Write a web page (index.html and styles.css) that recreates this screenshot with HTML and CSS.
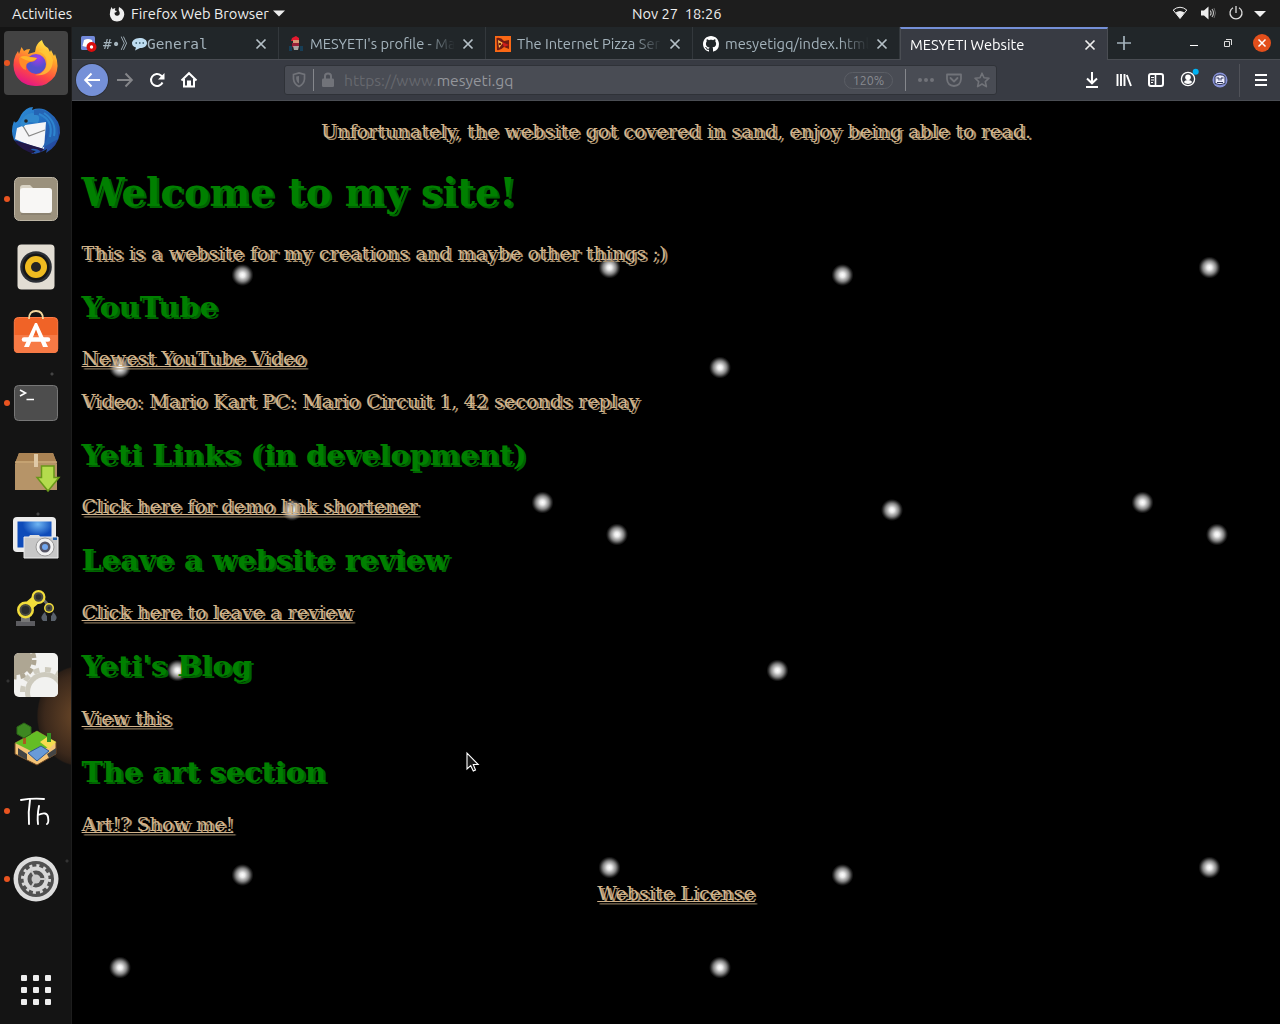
FILE: index.html
```html
<!DOCTYPE html>
<html lang="en">
<head>
<meta charset="utf-8">
<title>MESYETI Website</title>
<link rel="stylesheet" href="styles.css">
</head>
<body>
<header class="topbar">
  <span class="activities">Activities</span>
  <svg class="app-icon" width="16" height="16" viewBox="0 0 16 16"><path d="M2.500 1L3.800 3.300Q5 2 6.500 2.500Q5.500 3.600 6 4.500L8 5Q7 6.500 5.500 6.800Q5.500 10 8.500 9.700Q11.500 9 10.500 6Q9 4.500 10 1Q15.500 3.500 15.300 8.500Q14.500 15.300 8 15.500Q1.500 15 .8 8.500Q.8 4 2.500 1Z" fill="#eee"/></svg>
  <span class="app-name">Firefox Web Browser</span>
  <svg class="caret" width="12" height="7" viewBox="0 0 12 7"><path d="M0 .5H12L6 6.500Z" fill="#eee"/></svg>
  <span class="clock">Nov 27&nbsp; 18:26</span>
  <div class="tray">
    <svg width="16" height="16" viewBox="0 0 16 16"><path d="M1.200 5Q8-.5 14.800 5L8 13.500Z" fill="none" stroke="#eee"/><path d="M3.600 7.500Q8 4.500 12.400 7.500L8 13.500Z" fill="#eee"/></svg>
    <svg width="16" height="16" viewBox="0 0 16 16"><path d="M1 5.500H4L8.500 1.500V14.500L4 10.500H1Z" fill="#eee"/><path d="M10.200 5.500Q12 8 10.200 10.500M12 4Q15 8 12 12" fill="none" stroke="#bbb" stroke-width="1.200"/><path d="M14 3Q17 8 14 13" fill="none" stroke="#666"/></svg>
    <svg width="16" height="16" viewBox="0 0 16 16"><path d="M5 2.700A6 6 0 1 0 11 2.700M8 1V8" fill="none" stroke="#ddd" stroke-width="1.300"/></svg>
    <svg width="12" height="16" viewBox="0 0 12 16"><path d="M0 5H12L6 11Z" fill="#eee"/></svg>
  </div>
</header>

<div class="desktop">
<nav class="dock">
  <div class="tile tile-focus running"><svg width="48" height="48" viewBox="0 0 48 48">
    <defs><linearGradient id="ff" x1=".8" y1="0" x2=".35" y2="1"><stop offset="0" stop-color="#fff44f"/><stop offset=".35" stop-color="#ffa52a"/><stop offset=".7" stop-color="#ff4a42"/><stop offset="1" stop-color="#e31587"/></linearGradient><radialGradient id="fp" cx=".6" cy=".2"><stop offset="0" stop-color="#a33bea"/><stop offset="1" stop-color="#5350cc"/></radialGradient></defs>
    <path d="M6 12L7 15L9.500 8L12 12Q14 10 18 10L16 15L23 13L24 8Q26 3 30 1Q31 6 36 9L38 13L39 11L42 17L43 15Q48 27 43 37Q35 48 23 47Q6 46 2 31Q0 20 6 12Z" fill="url(#ff)"/>
    <circle cx="24" cy="25" r="10" fill="url(#fp)"/>
    <path d="M7 19Q13 15 18 18L25 19Q23 23 18 23Q13 24 14 31Q7 29 7 19Z" fill="#ff8b28"/><path d="M8 18Q13 16 17 18L25 19Q23 22 19 22Q14 22 8 18Z" fill="#ffb42b"/>
    <path d="M26 12Q37 16 34 28Q31 35 23 36Q40 38 41 21Q39 15 33 11Z" fill="#ffc935" opacity=".75"/>
  </svg></div>
  <div class="tile"><svg width="50" height="50" viewBox="0 0 50 50">
    <defs><linearGradient id="tb" x1="0" y1="0" x2="1" y2="1"><stop offset="0" stop-color="#2f95dd"/><stop offset=".5" stop-color="#2269bd"/><stop offset="1" stop-color="#263d94"/></linearGradient></defs>
    <path d="M10 9Q15 1 22 1L21 4Q31 0 39 7Q50 15 49 27Q47 40 35 47L36 43Q28 48 20 48L25 45Q9 43 3 34Q-1 25 3 15Q5 20 10 9Z" fill="url(#tb)"/>
    <path d="M6 22L14 19L35 16L33 43Q19 40 4 33Z" fill="#f5f5f7"/><path d="M12 20L18 30L34 24" fill="none" stroke="#888" stroke-width="1.300"/>
    <path d="M3 34L33 43L30 46Q26 42 20 43L24 48Q9 44 3 34Z" fill="#211747"/>
    <path d="M9 18Q12 8 21 7Q31 8 27 17L18 16L12 21Z" fill="#3189ce"/><circle cx="15" cy="15" r="1.800" fill="#222"/>
    <path d="M23 9Q36 8 38 20Q39 30 31 42L47 33Q48 20 41 10Q33 1 23 4Z" fill="#2564b4"/><path d="M28 8Q43 14 39 31M33 7Q46 16 43 30" fill="none" stroke="#2e85cf" stroke-width="2"/>
  </svg></div>
  <div class="tile running"><svg width="46" height="46" viewBox="0 0 46 46"><rect x="1.500" y="1.500" width="43" height="43" rx="5" fill="#9b917d" stroke="#bdb5a4"/><path d="M7 16V12Q7 9 10 9H17L20 12V16Z" fill="#d9d3c5"/><rect x="7" y="12" width="32" height="25" rx="3" fill="#f8f7f5"/><path d="M8 38H38" stroke="#7f7769"/></svg></div>
  <div class="tile"><svg width="38" height="46" viewBox="0 0 38 46"><rect x=".5" y=".5" width="37" height="45" rx="4" fill="#e2ddd3"/><circle cx="19" cy="23" r="15.800" fill="#2c3036"/><circle cx="19" cy="23" r="13.500" fill="#171717"/><circle cx="19" cy="23" r="11" fill="#efbb20"/><circle cx="19" cy="23" r="5" fill="#242424"/></svg></div>
  <div class="tile"><svg class="raise-bag" width="46" height="46" viewBox="0 0 46 46"><rect x="1.300" y="8.500" width="43.400" height="35" rx="4" fill="#f06327" stroke="#ff7b45"/><path d="M1 26H45V40Q45 44 41 44H5Q1 44 1 40Z" fill="#f77a45"/><path d="M16 10Q16 2 23 2T30 10" fill="none" stroke="#f4d79d" stroke-width="1.800"/><path d="M22 14H24L35 38H30L23 20.500L16 38H11Z" fill="#fff"/><path d="M11 30.500H35" stroke="#fff" stroke-width="4.500" stroke-linecap="round"/></svg></div>
  <div class="tile running"><svg width="46" height="38" viewBox="0 0 46 38"><rect x="1.500" y="1.500" width="43" height="35" rx="4" fill="#4d4d4d" stroke="#777"/><path d="M7 6L12.500 9L7 12M13.500 15.500H21" fill="none" stroke="#fff" stroke-width="1.600"/></svg></div>
  <div class="tile"><svg class="lower-box" width="46" height="42" viewBox="0 0 46 42"><path d="M6 1H40L44 12V38H2V12Z" fill="#b69468"/><path d="M6 1H40L44 11H2Z" fill="#aa8354"/><path d="M2 10H44" stroke="#dfc18f"/><path d="M21 2H25V15H21Z" fill="#dfc9a7"/><path d="M28.500 14H41V25.500H46L35 39L24 25.500H28.500Z" fill="#b4dc4d" stroke="#689719" stroke-width="1.500"/></svg></div>
  <div class="tile"><svg class="raise-shot" width="48" height="46" viewBox="0 0 48 46"><defs><radialGradient id="sc" cx=".6" cy=".1"><stop offset="0" stop-color="#70b6f3"/><stop offset=".9" stop-color="#0e4bb9"/></radialGradient></defs><rect x="1" y="2" width="43" height="35" rx="4" fill="#ececec"/><rect x="5.500" y="6.500" width="34" height="26" fill="url(#sc)"/><path d="M12 22H46V43H12Z" fill="#c7c7c7" stroke="#eee"/><path d="M18 20H27L29 23H16Z" fill="#ddd"/><circle cx="33" cy="32" r="9" fill="#f1f1f1" stroke="#999"/><circle cx="33" cy="32" r="5.500" fill="#556"/><circle cx="33" cy="32" r="3" fill="#70a5ee"/><rect x="41" y="22.500" width="4" height="2.500" fill="#2463b0"/></svg></div>
  <div class="tile"><svg class="robot" width="42" height="40" viewBox="0 0 42 40"><rect x="1" y="33" width="19" height="5" fill="#5c5c60"/><path d="M6 24H15V34H6Z" fill="#777"/><path d="M26 9L36 20" fill="none" stroke="#686868" stroke-width="3"/><path d="M10 21L24 9" stroke="#f2dd3b" stroke-width="9"/><circle cx="10.500" cy="22" r="8.500" fill="#f2dd3b"/><circle cx="23.500" cy="9" r="7" fill="#f2dd3b"/><circle cx="34" cy="20" r="5" fill="#f2dd3b"/><g fill="#2a2c2d" stroke="#4b4b42" stroke-width="2"><circle cx="10.500" cy="22" r="5"/><circle cx="23.500" cy="9" r="3.800"/><circle cx="34" cy="20" r="2.500"/></g><path d="M30 24Q24 29 28 33H32V28L31 27ZM38 24Q44 29 40 33H36V28L37 27Z" fill="#59616b"/></svg></div>
  <div class="tile"><svg width="46" height="46" viewBox="0 0 46 46"><defs><clipPath id="rr"><rect x="1" y="1" width="44" height="44" rx="5"/></clipPath></defs><g clip-path="url(#rr)"><rect width="46" height="46" fill="#f2f2f0"/><circle cx="4" cy="8" r="15" fill="#aea693"/><circle cx="4" cy="8" r="17" fill="none" stroke="#aea693" stroke-width="5" stroke-dasharray="5 4"/><circle cx="32" cy="40" r="20" fill="#cdcabd"/><circle cx="32" cy="40" r="22.500" fill="none" stroke="#cdcabd" stroke-width="5" stroke-dasharray="6 5.700"/><circle cx="32" cy="40" r="15" fill="#f2f2f0"/></g></svg></div>
  <div class="tile"><svg class="island" width="46" height="46" viewBox="0 0 46 46"><path d="M2 20L24 8L43 19V31L24 42L2 31Z" fill="#f5c477" stroke="#6e4824"/><path d="M2 20L24 8L43 19L24 31Z" fill="#64bd25"/><path d="M27 19L34 14L43 19L36 26Z" fill="#f6dc4f"/><path d="M5 25L14 31V37L5 32ZM34 31L43 25V31L36 35Z" fill="#444"/><path d="M15 30L28 23L36 28L24 38Z" fill="#699bd8" stroke="#315a90"/><path d="M10 12H13V21H10Z" fill="#a95b20"/><path d="M4 4L11 0L18 4V11L11 15L4 11Z" fill="#3d8821" stroke="#2b6717"/><path d="M34 10H38V19H34Z" fill="#349023"/></svg></div>
  <div class="tile running"><svg width="32" height="30" viewBox="0 0 32 30"><path d="M1 4Q13 2 24 3M10 4Q8 16 9 28M19 10Q17 20 18 28M18 19Q27 15 28 21T27 28" fill="none" stroke="#fff" stroke-width="1.900" stroke-linecap="round"/></svg></div>
  <div class="tile running"><svg width="46" height="46" viewBox="0 0 46 46"><circle cx="23" cy="23" r="22.500" fill="#dedede"/><circle cx="23" cy="23" r="18" fill="#515151"/><circle cx="23" cy="23" r="13.500" fill="none" stroke="#d8d8d8" stroke-width="3" stroke-dasharray="3 4.070"/><circle cx="23" cy="23" r="10.500" fill="none" stroke="#d8d8d8" stroke-width="4"/><circle cx="23" cy="23" r="4.500" fill="#c9c9c9"/><path d="M23 23H33M23 23L18 14M23 23L18 32" stroke="#c9c9c9" stroke-width="2"/></svg></div>
  <div class="apps"><i></i><i></i><i></i><i></i><i></i><i></i><i></i><i></i><i></i></div>
</nav>

<main class="browser">
  <div class="tabs">
    <div class="tab"><svg width="16" height="16" viewBox="0 0 16 16"><rect width="14" height="14" rx="1.500" fill="#7289da"/><path d="M3 4Q7 2 11 4L12.500 10Q7 12 1.500 10Z" fill="#fff"/><circle cx="10.500" cy="11" r="5" fill="#d90d0d"/><circle cx="10.500" cy="11" r="1.700" fill="#fff"/></svg><span class="label mono"><span class="hash">#•》</span><svg class="bubble" width="15" height="14" viewBox="0 0 15 14"><path d="M7.500 1C12 1 15 3 15 6S12 11 8 11L3 13.500L4 10.500C1 10 0 8 0 6S3 1 7.500 1Z" fill="#bddcf0"/><path d="M3.500 6H5M7 6H8.500M10.500 6H12" stroke="#356" stroke-width="1.500"/></svg>General</span><svg class="close" width="10" height="10" viewBox="0 0 10 10"><path d="M.5.5L9.500 9.500M9.500.5L.5 9.500"/></svg></div>
    <div class="tab"><svg width="16" height="16" viewBox="0 0 16 16"><path d="M4 2L8 0L11 2V5H3Z" fill="#e4192e"/><path d="M5 4H11V8H5Z" fill="#d89877"/><path d="M4 7H11V11H4Z" fill="#972038"/><path d="M1 10H4V15H1ZM12 10H15V15H12Z" fill="#173e56"/><path d="M5 10H11L10 14H6Z" fill="#aaa7a4"/></svg><span class="label">MESYETI's profile - Ma</span><svg class="close" width="10" height="10" viewBox="0 0 10 10"><path d="M.5.5L9.500 9.500M9.500.5L.5 9.500"/></svg></div>
    <div class="tab"><svg width="16" height="16" viewBox="0 0 16 16"><rect width="16" height="16" fill="#fa6815"/><path d="M1.500 2Q6 1 9 5L14 4V13L9 11Q5 15 2 14Z" fill="#721c12"/><path d="M3 4L8 7L4 12Z" fill="#ffc34f"/><path d="M7 6L14 9L9 11Z" fill="#cf1c1c"/><circle cx="5" cy="8" r="1.300" fill="#721c12"/></svg><span class="label">The Internet Pizza Ser</span><svg class="close" width="10" height="10" viewBox="0 0 10 10"><path d="M.5.5L9.500 9.500M9.500.5L.5 9.500"/></svg></div>
    <div class="tab"><svg width="16" height="16" viewBox="0 0 16 16"><path fill="#fff" d="M8 0C3.580 0 0 3.580 0 8c0 3.540 2.290 6.530 5.470 7.590.4.070.55-.17.550-.38 0-.19-.01-.82-.01-1.490-2.010.37-2.530-.49-2.690-.94-.09-.23-.48-.94-.82-1.130-.28-.15-.68-.52-.01-.53.63-.01 1.080.58 1.230.82.72 1.210 1.870.87 2.330.66.070-.52.280-.87.510-1.070-1.780-.2-3.640-.89-3.640-3.950 0-.87.310-1.590.82-2.150-.08-.2-.36-1.020.080-2.120 0 0 .67-.21 2.200.82.640-.18 1.320-.27 2-.27s1.360.09 2 .27c1.530-1.040 2.200-.82 2.200-.82.440 1.100.16 1.920.080 2.120.51.560.82 1.270.82 2.150 0 3.070-1.870 3.750-3.650 3.950.29.250.54.730.54 1.480 0 1.070-.01 1.930-.01 2.200 0 .21.150.46.550.38A8 8 0 0 0 16 8c0-4.420-3.580-8-8-8z"/></svg><span class="label">mesyetigq/index.html</span><svg class="close" width="10" height="10" viewBox="0 0 10 10"><path d="M.5.5L9.500 9.500M9.500.5L.5 9.500"/></svg></div>
    <div class="tab active"><span class="label">MESYETI Website</span><svg class="close" width="10" height="10" viewBox="0 0 10 10"><path d="M.5.5L9.500 9.500M9.500.5L.5 9.500"/></svg></div>
    <svg class="newtab" width="14" height="14" viewBox="0 0 14 14"><path d="M7 0V14M0 7H14" stroke="#a4b3bc" stroke-width="1.700"/></svg>
    <div class="window-buttons">
      <svg width="8" height="8" viewBox="0 0 8 8"><path d="M0 6.500H8" stroke="#fff"/></svg>
      <svg width="8" height="8" viewBox="0 0 8 8"><path d="M.5 2.500H5.500V7.500H.5ZM2 .5H7.500V6" fill="none" stroke="#ddd"/></svg>
      <svg width="18" height="18" viewBox="0 0 18 18"><circle cx="9" cy="9" r="9" fill="#e34f1b"/><path d="M5.500 5.500L12.500 12.500M12.500 5.500L5.500 12.500" stroke="#fff" stroke-width="1.500"/></svg>
    </div>
  </div>

  <div class="toolbar">
    <div class="nav-buttons">
      <span class="back"><svg width="16" height="16" viewBox="0 0 16 16"><path d="M16 8H1.500M7.500 1.500L1.200 8L7.500 14.500" fill="none" stroke="#fff" stroke-width="2"/></svg></span>
      <svg width="16" height="16" viewBox="0 0 16 16"><path d="M0 8H14.500M8.500 1.500L14.800 8L8.500 14.500" fill="none" stroke="#85868a" stroke-width="2"/></svg>
      <svg width="16" height="16" viewBox="0 0 16 16"><path d="M13.500 10.500A6 6 0 1 1 12 3.500L14.500 6" fill="none" stroke="#fff" stroke-width="2"/><path d="M15.500 1V7.500H9Z" fill="#fff"/></svg>
      <svg width="16" height="16" viewBox="0 0 16 16"><path d="M.5 8.500L8 1.200L15.500 8.500M3 7V14.500H13V7M7 14V9.500H9V14" fill="none" stroke="#fff" stroke-width="2"/></svg>
    </div>
    <div class="urlbar">
      <svg class="shield" width="14" height="16" viewBox="0 0 14 16"><path d="M1.500 2.500L7 1L12.500 2.500V7Q12 12 7 14.500Q2 12 1.500 7Z" fill="none" stroke="#717379" stroke-width="1.700"/><path d="M7 4V11.500Q4.500 10 4.200 7V4.500Z" fill="#717379"/></svg>
      <i class="bar"></i>
      <svg class="lock" width="12" height="16" viewBox="0 0 12 16"><rect y="6.500" width="12" height="8.500" rx="1.200" fill="#717379"/><path d="M3 7V4Q3 1.500 6 1.500T9 4V7" fill="none" stroke="#717379" stroke-width="2"/></svg>
      <span class="url">https://www.<b>mesyeti.gq</b></span>
      <span class="zoom">120%</span><i class="bar"></i>
      <svg class="dots" width="16" height="4" viewBox="0 0 16 4"><path d="M2 2H2.010M8 2H8.010M14 2H14.010" stroke="#717379" stroke-width="4" stroke-linecap="round"/></svg>
      <svg class="pocket" width="16" height="16" viewBox="0 0 16 16"><path d="M1 2.500H15V7Q14.500 13.500 8 14Q1.500 13.500 1 7ZM4.500 6L8 9.500L11.500 6" fill="none" stroke="#717379" stroke-width="1.800" stroke-linejoin="round" stroke-linecap="round"/></svg>
      <svg width="16" height="16" viewBox="0 0 16 16"><path d="M8 1.200L10 5.800L15 6.200L11.300 9.600L12.400 14.600L8 12L3.600 14.600L4.700 9.600L1 6.200L6 5.800Z" fill="none" stroke="#717379" stroke-width="1.600" stroke-linejoin="round"/></svg>
    </div>
    <div class="tools">
      <svg width="16" height="16" viewBox="0 0 16 16"><path d="M8 0V11M3 6.500L8 11.300L13 6.500M2 15H14" fill="none" stroke="#fff" stroke-width="2"/></svg>
      <svg width="16" height="16" viewBox="0 0 16 16"><path d="M1.500 2V14M5 2V14M8.500 2V14M10.800 3L15 14" fill="none" stroke="#fff" stroke-width="1.900"/></svg>
      <svg width="16" height="16" viewBox="0 0 16 16"><rect x="1" y="2" width="14" height="12" rx="2" fill="none" stroke="#fff" stroke-width="2"/><path d="M7.500 2V14" stroke="#fff" stroke-width="1.600"/><path d="M3 5.500H6M3 8H6M3 10.500H5" stroke="#fff"/></svg>
      <svg width="20" height="20" viewBox="-1 -3 20 20"><circle cx="8" cy="8" r="6.600" fill="none" stroke="#fff" stroke-width="1.300"/><circle cx="8" cy="6.300" r="2.800" fill="#fff"/><path d="M3.800 11Q5 9 8 9T12.200 11Q11 13 8 13T3.800 11Z" fill="#fff"/><circle cx="15.700" cy="0.700" r="3" fill="#00b3f4"/></svg>
      <svg width="16" height="16" viewBox="0 0 16 16"><circle cx="8" cy="8" r="7.500" fill="#8993d9"/><path d="M3 4.500Q8 1 13 4.500V11.500Q8 14 3 11.500Z" fill="#eef" stroke="#293152"/><path d="M4.500 6H7V8.500M11.500 6H9V8.500M5 10.500H11" fill="none" stroke="#293152"/></svg>
      <i class="divider"></i>
      <svg width="12" height="16" viewBox="0 0 12 16"><path d="M0 3H12M0 8H12M0 13H12" stroke="#fff" stroke-width="2"/></svg>
    </div>
  </div>

  <article class="page">
    <p class="center">Unfortunately, the website got covered in sand, enjoy being able to read.</p>
    <h1>Welcome to my site!</h1>
    <p>This is a website for my creations and maybe other things ;)</p>
    <h2>YouTube</h2>
    <p><a>Newest YouTube Video</a></p>
    <p>Video: Mario Kart PC: Mario Circuit 1, 42 seconds replay</p>
    <h2>Yeti Links (in development)</h2>
    <p><a>Click here for demo link shortener</a></p>
    <h2>Leave a website review</h2>
    <p><a>Click here to leave a review</a></p>
    <h2>Yeti's Blog</h2>
    <p><a>View this</a></p>
    <h2>The art section</h2>
    <p><a>Art!? Show me!</a></p>
    <p class="center license"><a>Website License</a></p>
  </article>
</main>
</div>
<svg class="cursor" width="14" height="20" viewBox="0 0 14 20"><path d="M1 1V17L4.700 13.700L7.300 19L9.500 18L7.300 12.500H12.200Z" fill="#191919" stroke="#fff" stroke-width="1.100"/></svg>
</body>
</html>
```
FILE: styles.css
```css
* { box-sizing: border-box; }
body {
  margin: 0; width: 1280px; height: 1024px; overflow: hidden;
  display: flex; flex-direction: column; background: #000;
  font: 14.670px/20px Ubuntu, "Noto Sans", "Open Sans", sans-serif; color: #eee;
}
svg { display: block; flex: none; overflow: visible; }

.topbar { height: 27px; flex: none; background: #1d1d1d; display: flex; align-items: center; padding-left: 12px; white-space: nowrap; }
.activities { width: 97px; }
.app-icon { margin-right: 6px; }
.app-name { width: 142px; }
.clock { margin-left: 347px; }
.tray { margin-left: auto; display: flex; gap: 12px; padding-right: 14px; }
.tray svg { position: relative; left: 2px; top: -1px; }
.tray svg:last-child { left: 0; top: 0; }

.desktop { flex: 1; min-height: 0; display: flex; }
.dock {
  width: 72px; flex: none; background: #141414; border-right: 1px solid #1d1d1d;
  display: flex; flex-direction: column; align-items: center; gap: 4px; padding-top: 4px;
  background-image:
    radial-gradient(circle at 60px 65px, #444 0 1px, transparent 2px),
    radial-gradient(circle at 52px 347px, #444 0 1px, transparent 2px),
    radial-gradient(circle at 38px 487px, #444 0 1px, transparent 2px),
    radial-gradient(circle at 8px 654px, #333 0 1px, transparent 2px),
    radial-gradient(circle at 67px 834px, #333 0 1px, transparent 2px),
    radial-gradient(ellipse 42px 51px at 78px 689px, #6a4728, #3b281b 80%, #2a1e16 95%, transparent 98%);
}
.tile { width: 64px; height: 64px; flex: none; display: flex; align-items: center; justify-content: center; position: relative; }
.tile-focus { background: #434343; border-radius: 4px; }
.running::before { content: ""; position: absolute; left: 0; top: 29px; width: 6px; height: 6px; border-radius: 50%; background: #e95420; }
.raise-bag { margin-bottom: 6px; }
.lower-box { margin-top: 4px; }
.raise-shot { margin-bottom: 2px; }
.robot { margin-top: 2px; }
.island { margin-top: 6px; }
.apps { margin-top: 60px; display: grid; grid-template-columns: repeat(3, 6px); gap: 6px; }
.apps i { width: 6px; height: 6px; border-radius: 1px; background: #eee; }

.browser { flex: 1; min-width: 0; display: flex; flex-direction: column; }
.tabs { height: 33px; flex: none; display: flex; align-items: center; background: #212629; border-bottom: 1px solid #4a4d53; }
.tab { width: 207px; height: 32px; flex: none; display: flex; align-items: center; padding: 1px 12px 0 9px; border-right: 1px solid #33383c; color: #a4b3bc; }
.tab:nth-child(4) { padding-left: 10px; }
.label { flex: 1; min-width: 0; margin: 0 8px 0 6px; overflow: hidden; white-space: nowrap; -webkit-mask-image: linear-gradient(90deg, #000 calc(100% - 30px), transparent); mask-image: linear-gradient(90deg, #000 calc(100% - 30px), transparent); }
.close { stroke: #b5c0c7; stroke-width: 1.700; }
.mono { display: flex; align-items: center; font-family: "DejaVu Sans Mono", "Noto Sans CJK JP", monospace; font-size: 14.400px; margin-right: 0; }
.hash { width: 29px; flex: none; }
.active { height: 33px; align-self: flex-start; background: #383b43; border-top: 2px solid #7590d8; border-left: 1px solid #4a4d53; border-right-color: #4a4d53; padding: 0 12px 0 9px; color: #fff; width: 208px; }
.active .label { margin-left: 0; }
.active .close { stroke: #eee; }
.newtab { margin-left: 9px; }
.window-buttons { margin-left: auto; display: flex; align-items: center; padding-right: 9px; gap: 26px; }
.window-buttons svg:last-child { margin-left: -5px; }

.toolbar { height: 41px; flex: none; background: #383b43; border-bottom: 1px solid #4a4d53; display: flex; align-items: center; }
.nav-buttons { display: flex; align-items: center; gap: 16px; margin-left: 4px; }
.back { width: 32px; height: 32px; border-radius: 50%; background: #7590d8; display: flex; align-items: center; justify-content: center; box-shadow: 0 0 0 1px #2d3037; margin-right: -7px; }
.urlbar { width: 713px; height: 30px; margin-left: 87px; border: 1px solid #2f3238; border-radius: 3px; background: #494c54; display: flex; align-items: center; padding: 0 6px 0 7px; }
.bar { width: 1px; height: 22px; background: #85878c; }
.shield { margin-right: 7px; }
.lock { margin-left: 8px; }
.url { margin-left: 10px; color: #66686e; flex: 1; font-size: 15.600px; }
.url b { font-weight: 400; color: #94969b; }
.zoom { width: 49px; height: 17px; border: 1px solid #5b5e65; border-radius: 9px; font-size: 12.500px; line-height: 15px; text-align: center; color: #888a90; margin-right: 12px; }
.dots { margin: 0 12px; }
.pocket { margin-right: 12px; }
.tools { margin-left: auto; display: flex; align-items: center; gap: 16px; padding-right: 13px; }
.tools svg:nth-child(4) { margin: -4px -3px 0 -1px; }
.divider { width: 1px; height: 33px; background: #505259; margin: 0 -1px 0 -5px; }

.page {
  flex: 1; min-height: 0; padding: 0 9.600px; font: 19.200px/24px "DejaVu Serif", serif; color: tan;
  text-shadow: 2.400px 2.400px #a6906f; background-color: #000; background-size: 600px 600px;
  --dot: #fff 0, #e8e8e8 2.500px, #888 6.500px, #222 9.500px, transparent 11px;
  background-image:
    radial-gradient(circle at 170.500px 174px, var(--dot)),
    radial-gradient(circle at 537.500px 166.500px, var(--dot)),
    radial-gradient(circle at 48px 266.500px, var(--dot)),
    radial-gradient(circle at 220px 409px, var(--dot)),
    radial-gradient(circle at 470.500px 401.500px, var(--dot)),
    radial-gradient(circle at 545px 433.500px, var(--dot)),
    radial-gradient(circle at 105.500px 569.500px, var(--dot));
}
.page p { margin: 19.200px 0; }
.page .center { text-align: center; }
.page h1, .page h2 { color: green; text-shadow: 2.400px 2.400px #006400; }
.page h1 { font-size: 38.400px; line-height: 46.600px; margin: 25.700px 0; }
.page h2 { font-size: 28.800px; line-height: 33.800px; margin: 24.600px 0 22.600px; }
.page h2:nth-of-type(n+3) { margin-bottom: 23.600px; }
.page a { text-decoration: underline 1px; text-decoration-skip-ink: none; }
.page .license { margin-top: 45px; }

.cursor { position: absolute; left: 466px; top: 752px; }
```
